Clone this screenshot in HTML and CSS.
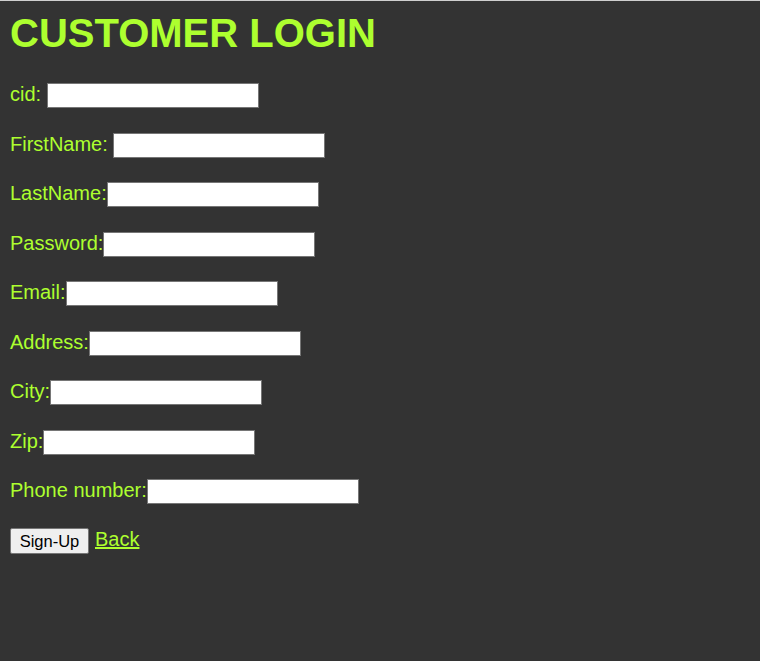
FILE: index.html
```html
<!DOCTYPE html>
<html lang="en">
<head>
<meta charset="utf-8">
<title>Customer Login</title>
<link rel="stylesheet" href="styles.css">
</head>
<body>
<main class="page">
  <h1 class="title">CUSTOMER LOGIN</h1>
  <form class="form">
    <div class="row"><label class="lbl" for="cid">cid:&nbsp;</label><input class="field" id="cid" type="text"></div>
    <div class="row"><label class="lbl" for="fn">FirstName:&nbsp;</label><input class="field" id="fn" type="text"></div>
    <div class="row"><label class="lbl" for="ln">LastName:</label><input class="field" id="ln" type="text"></div>
    <div class="row"><label class="lbl" for="pw">Password:</label><input class="field" id="pw" type="password"></div>
    <div class="row"><label class="lbl" for="em">Email:</label><input class="field" id="em" type="text"></div>
    <div class="row"><label class="lbl" for="ad">Address:</label><input class="field" id="ad" type="text"></div>
    <div class="row"><label class="lbl" for="ci">City:</label><input class="field" id="ci" type="text"></div>
    <div class="row"><label class="lbl" for="zp">Zip:</label><input class="field" id="zp" type="text"></div>
    <div class="row"><label class="lbl" for="ph">Phone number:</label><input class="field" id="ph" type="text"></div>
    <div class="row actions"><button class="btn" type="button">Sign-Up</button><a class="back" href="#">Back</a></div>
  </form>
</main>
</body>
</html>
```
FILE: styles.css
```css
html, body {
  margin: 0;
  padding: 0;
  height: 100%;
}
body {
  background: #333333;
  border-top: 1px solid #cfcfcf;
  box-sizing: border-box;
  font-family: "Liberation Sans", Arial, sans-serif;
  font-size: 20px;
  color: #adff2f;
}
.page {
  padding: 9px 10px 0 10px;
}
.title {
  margin: 0;
  font-size: 40px;
  font-weight: bold;
  line-height: 46px;
  color: #adff2f;
}
.form {
  margin-top: 27px;
  display: flex;
  flex-direction: column;
  gap: 24.55px;
}
.row {
  display: flex;
  align-items: center;
  height: 25px;
}
.lbl {
  white-space: pre;
  line-height: 23px;
  position: relative;
  top: -1px;
}
.field {
  box-sizing: border-box;
  width: 212px;
  height: 25px;
  margin: 0;
  padding: 1px 2px;
  border: 1px solid #767676;
  background: #ffffff;
  font-family: "Liberation Sans", Arial, sans-serif;
  font-size: 16px;
}
.actions {
  height: 26px;
  margin-top: -0.5px;
  gap: 6px;
}
.btn {
  box-sizing: border-box;
  height: 26px;
  width: 79px;
  margin: 0;
  padding: 1px 0 0;
  border: 1px solid #767676;
  border-radius: 2px;
  background: #efefef;
  color: #000;
  font-family: "Liberation Sans", Arial, sans-serif;
  font-size: 16.5px;
}
.back {
  color: #adff2f;
  text-decoration: underline;
  line-height: 23px;
  position: relative;
  top: -2px;
}
```
